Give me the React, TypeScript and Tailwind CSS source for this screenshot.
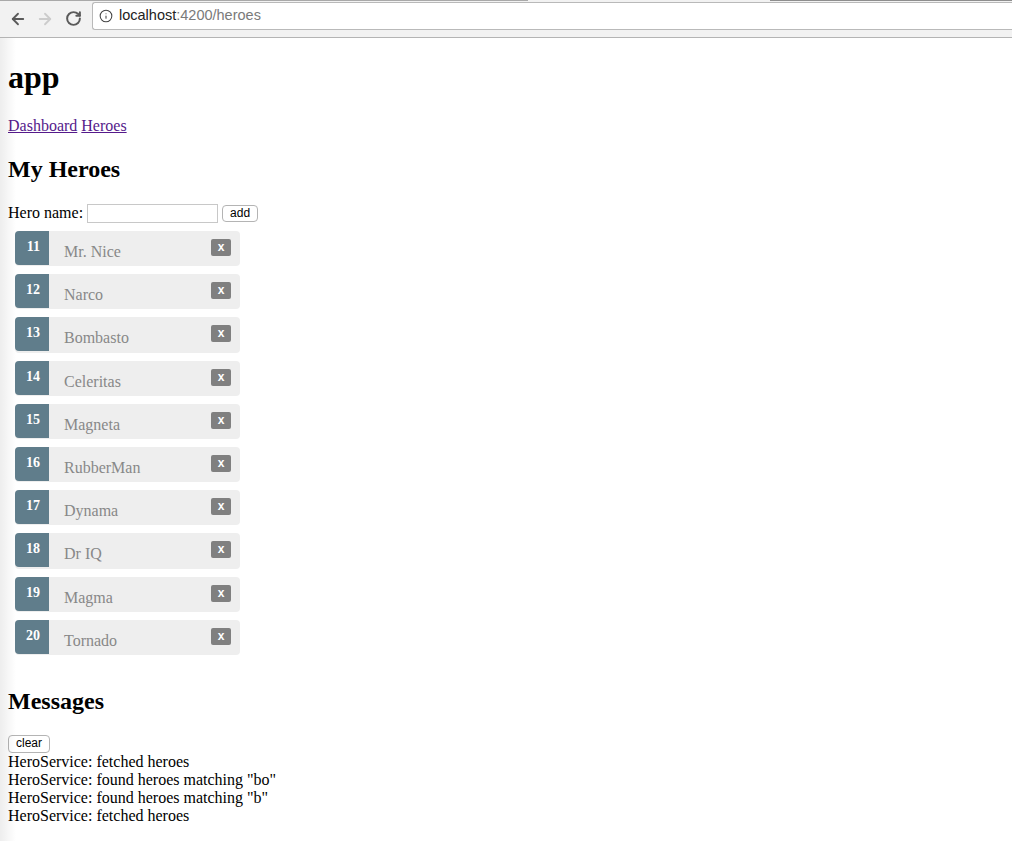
import { ArrowLeft, ArrowRight, RotateCw, Info } from 'lucide-react'

const heroes = [
  { id: 11, name: 'Mr. Nice' },
  { id: 12, name: 'Narco' },
  { id: 13, name: 'Bombasto' },
  { id: 14, name: 'Celeritas' },
  { id: 15, name: 'Magneta' },
  { id: 16, name: 'RubberMan' },
  { id: 17, name: 'Dynama' },
  { id: 18, name: 'Dr IQ' },
  { id: 19, name: 'Magma' },
  { id: 20, name: 'Tornado' },
]

const messages = [
  'HeroService: fetched heroes',
  'HeroService: found heroes matching "bo"',
  'HeroService: found heroes matching "b"',
  'HeroService: fetched heroes',
]

const serif = 'font-["Liberation_Serif",serif]'
const sans = 'font-["Liberation_Sans",Arial,sans-serif]'

function BrowserBar() {
  return (
    <div className="relative h-[38px] border-b border-[#b4b4b4] bg-[#f2f2f2]">
      {/* tab strip edges */}
      <div className="absolute left-0 top-0 h-[1px] w-[528px] bg-[#a9a9a9]" />
      <div className="absolute left-[770px] top-0 h-[1px] w-[242px] bg-[#8e8e8e]" />
      <div className="flex h-full items-center">
        <div className="flex w-[92px] items-center pl-[9px] text-[#5a5a5a]">
          <ArrowLeft size={18} strokeWidth={2.4} />
          <ArrowRight size={18} strokeWidth={2.4} className="ml-[9px] text-[#cccccc]" />
          <RotateCw size={17} strokeWidth={2.8} className="ml-[11px]" />
        </div>
        <div className="mt-[-5px] flex h-[28px] flex-1 items-center rounded-l-[3px] border border-r-0 border-[#b9b9b9] bg-white pl-[6px]">
          <Info size={14} strokeWidth={1.8} className="text-[#444]" />
          <span className={`${sans} ml-[6px] text-[14.5px] text-[#222]`}>
            localhost<span className="text-[#7a7a7a]">:4200/heroes</span>
          </span>
        </div>
      </div>
    </div>
  )
}

function HeroRow({ id, name }: { id: number; name: string }) {
  return (
    <li className="flex h-[35.2px] items-start rounded-[4px] bg-[#eeeeee]">
      <span
        className={`${serif} h-[34px] w-[34px] rounded-l-[4px] bg-[#607d8b] pr-[9px] pt-[8px] text-right text-[14px] font-bold leading-[16px] text-white`}
      >
        {id}
      </span>
      <span className={`${serif} ml-[15px] mt-[12px] flex-1 text-[16px] leading-[18px] text-[#888888]`}>
        {name}
      </span>
      <button
        type="button"
        className={`${sans} mr-[9px] mt-[8px] h-[17px] w-[20px] rounded-[2px] bg-[#808080] text-[12px] font-bold leading-[15px] text-white`}
      >
        x
      </button>
    </li>
  )
}

export default function App() {
  return (
    <div className="relative min-h-[841px] bg-white text-black">
      <BrowserBar />
      {/* left edge shadow */}
      <div className="pointer-events-none absolute bottom-0 left-0 top-[38px] w-[16px] bg-gradient-to-r from-black/[0.07] to-transparent" />

      <div className={`${serif} px-[8px]`}>
        <h1 className="mb-[21px] pt-[21px] text-[32px] font-bold leading-[37px]">app</h1>

        <nav className="text-[16px] leading-[18px]">
          <a href="#" className="text-[#551a8b] underline">Dashboard</a>{' '}
          <a href="#" className="text-[#551a8b] underline">Heroes</a>
        </nav>

        <h2 className="mb-[20px] mt-[20px] text-[24px] font-bold leading-[28px]">My Heroes</h2>

        <div className="flex h-[20px] items-center text-[16px] leading-[18px]">
          <label>Hero name:</label>
          <input className="ml-[4px] h-[19px] w-[131px] border border-[#c8c8c8] bg-white" />
          <button
            type="button"
            className={`${sans} ml-[4px] h-[17px] rounded-[4px] border border-[#b4b4b4] bg-white px-[7px] text-[12px] leading-[14px]`}
          >
            add
          </button>
        </div>

        <ul className="mb-[32px] mt-[8px] flex w-[232px] flex-col gap-[8px] pl-[7px]">
          {heroes.map((h) => (
            <HeroRow key={h.id} id={h.id} name={h.name} />
          ))}
        </ul>

        <h2 className="mb-[20px] text-[24px] font-bold leading-[28px]">Messages</h2>

        <button
          type="button"
          className={`${sans} block h-[18px] rounded-[4px] border border-[#b4b4b4] bg-white px-[7px] text-[12px] leading-[15px]`}
        >
          clear
        </button>
        <div className="text-[16px] leading-[18px]">
          {messages.map((m, i) => (
            <div key={i}>{m}</div>
          ))}
        </div>
      </div>
    </div>
  )
}
